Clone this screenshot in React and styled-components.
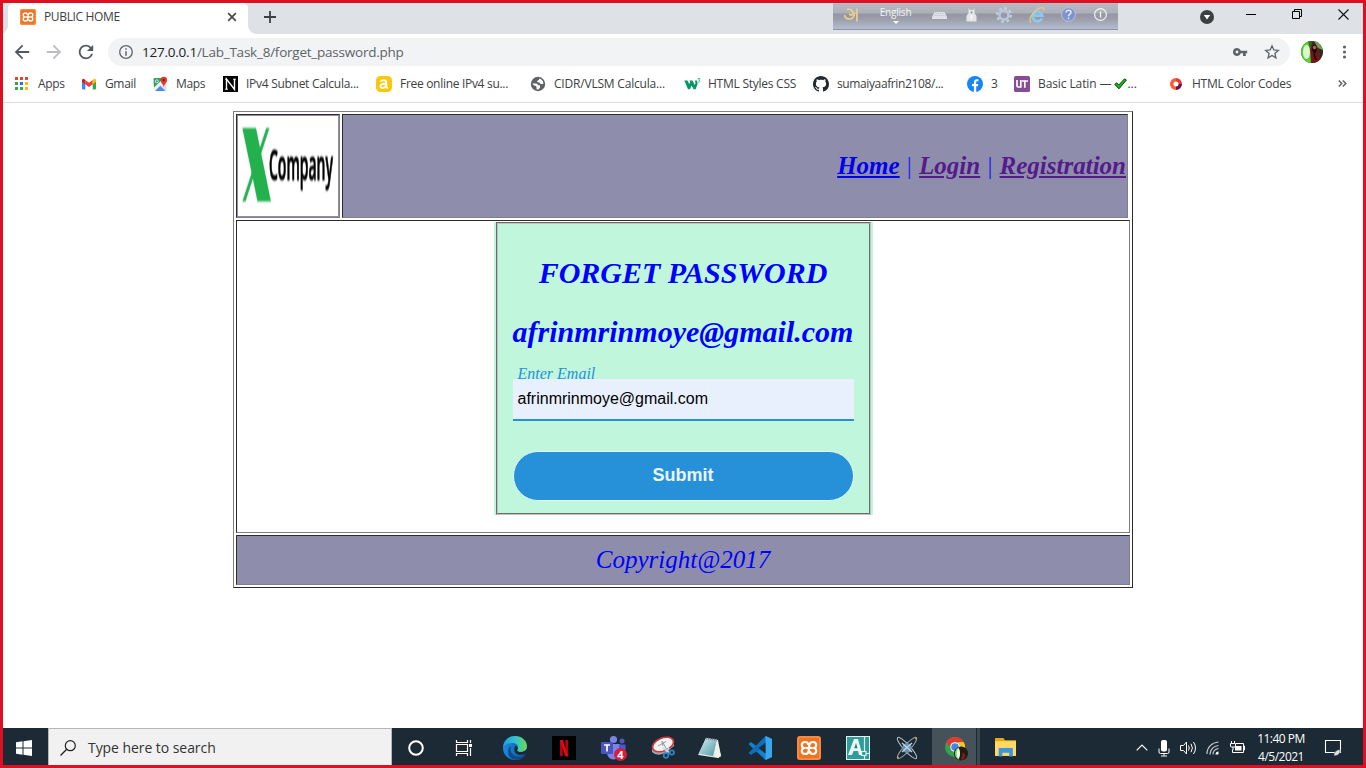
import React from "react";
import styled, { createGlobalStyle } from "styled-components";

const GlobalStyle = createGlobalStyle`
  * { box-sizing: border-box; }
  body { margin: 0; background: #fff; overflow: hidden; }
`;

const ui = `"Open Sans", "Noto Sans", sans-serif`;
const serif = `"Liberation Serif", "Times New Roman", serif`;
const arial = `"Liberation Sans", Arial, sans-serif`;

/* ---------- frame ---------- */
const Screen = styled.div`
  position: relative;
  display: flex;
  flex-direction: column;
  width: 1366px;
  height: 768px;
  border: 3px solid #dc1021;
  background: #fff;
  font-family: ${ui};
  overflow: hidden;
`;

const Icon = styled.svg`
  display: block;
  flex: none;
  width: ${(p) => p.$w || 16}px;
  height: ${(p) => p.$h || p.$w || 16}px;
  overflow: visible;
`;

const Text = styled.span`
  font-size: ${(p) => p.$size || 12}px;
  letter-spacing: ${(p) => p.$ls || 0}px;
  color: ${(p) => p.$color || "#3c4043"};
  white-space: pre;
  line-height: 16px;
`;

/* ---------- tab strip ---------- */
const TabStrip = styled.div`
  display: flex;
  flex: none;
  height: 31px;
  padding-left: 5px;
  background: #dee1e6;
`;

const Tab = styled.div`
  position: relative;
  display: flex;
  align-items: center;
  width: 240px;
  height: 31px;
  padding: 0 11px 3px 12px;
  background: #fff;
  border-radius: 5px 5px 0 0;
  &::before,
  &::after {
    content: "";
    position: absolute;
    bottom: 0;
    width: 8px;
    height: 8px;
  }
  &::before {
    left: -8px;
    background: radial-gradient(circle at 0 0, #dee1e6 7.5px, #fff 8px);
  }
  &::after {
    right: -8px;
    background: radial-gradient(circle at 100% 0, #dee1e6 7.5px, #fff 8px);
  }
`;

const TabTitle = styled(Text)`
  flex: 1;
  margin-left: 8px;
`;

const NewTab = styled.div`
  padding: 8px 0 0 16px;
  flex: 1;
`;

const WindowButtons = styled.div`
  display: flex;
  align-items: flex-start;
  padding: 5px 14px 0 0;
`;

const WinButton = styled.div`
  display: flex;
  width: ${(p) => p.$w}px;
  justify-content: flex-end;
  padding-top: ${(p) => p.$top || 0}px;
`;

/* ---------- address bar ---------- */
const Toolbar = styled.div`
  display: flex;
  flex: none;
  align-items: center;
  height: 36px;
  padding: 0 0 0 10px;
  gap: 14px;
`;

const Omnibox = styled.div`
  display: flex;
  align-items: center;
  width: 1182px;
  height: 28px;
  margin-left: -1px;
  padding: 0 10px;
  border-radius: 14px;
  background: #f1f3f4;
`;

const Url = styled.div`
  flex: 1;
  margin-left: 8px;
  font-size: 13.5px;
  letter-spacing: ${(p) => p.$ls}px;
  line-height: 20px;
  color: #5f6368;
  white-space: nowrap;
  b { font-weight: 400; color: #202124; }
`;

const OmniActions = styled.div`
  display: flex;
  align-items: center;
  gap: 16px;
`;

const Profile = styled.div`
  display: flex;
  align-items: center;
  gap: 19px;
  margin-left: -3px;
`;

/* ---------- bookmarks ---------- */
const Bookmarks = styled.div`
  display: flex;
  flex: none;
  align-items: center;
  height: 33px;
  padding: 0 0 5px 11px;
  border-bottom: 1px solid #dadce0;
`;

const BookmarkItem = styled.div`
  display: flex;
  align-items: center;
  gap: 8px;
  flex: none;
  width: ${(p) => p.$w}px;
`;

const LabelRow = styled.div`
  display: flex;
  align-items: center;
`;

/* ---------- page ---------- */
const Page = styled.main`
  flex: 1;
  padding-top: 8px;
  font-family: ${serif};
`;

const Layout = styled.div`
  display: flex;
  flex-direction: column;
  gap: 2px;
  width: 900px;
  height: 477px;
  margin: 0 auto;
  padding: 2px;
  border: 1px solid;
  border-color: #808080 #2c2c2c #2c2c2c #808080;
`;

const Cell = styled.div`
  border: 1px solid;
  border-color: #2c2c2c #808080 #808080 #2c2c2c;
  background: ${(p) => (p.$tint ? "#8e8eac" : "#fff")};
`;

const HeaderRow = styled.div`
  display: flex;
  flex: none;
  gap: 2px;
  height: 104px;
  padding-right: 2px;
`;

const LogoCell = styled(Cell)`
  width: 104px;
  padding: 1px;
`;

const NavCell = styled(Cell)`
  display: flex;
  flex: 1;
  align-items: center;
  justify-content: flex-end;
  gap: 6.25px;
  padding-right: 1px;
  color: #0000ff;
  font-size: 25px;
  font-style: italic;
`;

const NavLink = styled.span`
  font-weight: bold;
  text-decoration: underline;
  color: ${(p) => (p.$visited ? "#551a8b" : "#0000ee")};
`;

const Bar = styled.span`
  width: 6.9px;
  font-style: normal;
  text-align: center;
  color: #1c1cf8;
`;

const BodyCell = styled(Cell)`
  display: flex;
  flex: none;
  justify-content: center;
  align-items: flex-start;
  height: 313px;
  padding-top: 1px;
`;

const FormBack = styled.div`
  width: 379px;
  height: 293px;
  padding: 0 2px;
  background: #c0f7dc;
`;

const FormBox = styled.form`
  display: flex;
  flex-direction: column;
  height: 293px;
  padding: 32px 15px 0;
  border: 2px groove #c0c0c0;
`;

const Heading = styled.h3`
  margin: 0 0 25px;
  font-size: 30px;
  line-height: 34px;
  font-style: italic;
  text-align: center;
  color: #0000ff;
  white-space: nowrap;
`;

const Label = styled.label`
  margin-top: -9px;
  padding-left: 5px;
  font-size: 16px;
  line-height: 18px;
  font-style: italic;
  color: #2691d9;
`;

/* The field covers the lower edge of its label. */
const Field = styled.div`
  position: relative;
  height: 42px;
  margin: -4px 0 30px;
  padding: 0 5px;
  border-bottom: 2px solid #2691d9;
  background: #e8f0fe;
  font: 16px/39px ${arial};
  color: #000;
`;

const Submit = styled.button`
  height: 50px;
  padding: 0 0 2px;
  border: 1px solid #e2f6f2;
  border-radius: 25px;
  background: #2691d9;
  color: #e9f4fb;
  font: bold 18px ${arial};
`;

const Footer = styled(Cell)`
  flex: none;
  height: 50px;
  font-size: 25px;
  line-height: 48px;
  font-style: italic;
  text-align: center;
  color: #0000ff;
`;

/* ---------- input method bar ---------- */
const ImeBar = styled.div`
  position: absolute;
  top: -3px;
  left: 830px;
  display: flex;
  width: 285px;
  height: 30px;
  align-items: center;
  border-bottom: 1px solid #8d95ac;
  background: linear-gradient(#c65a6a 0, #c65a6a 3px, #b7bac4 3px, #adb0b9 13px, #9496a0 14px, #9b9eaa 19px, #b2bacd 28px);
`;

const ImeSlot = styled.div`
  display: flex;
  flex-direction: column;
  align-items: center;
  gap: 3px;
  width: ${(p) => p.$w}px;
`;

const ImeText = styled.span`
  font: 10px/12px ${ui};
  letter-spacing: -0.2px;
  color: #f4f5f7;
`;

/* ---------- taskbar ---------- */
const Taskbar = styled.footer`
  display: flex;
  flex: none;
  height: 37px;
  background: #1c2a35;
`;

const Start = styled.div`
  display: flex;
  align-items: center;
  width: 45px;
  padding: 2px 0 0 13px;
`;

const Search = styled.div`
  display: flex;
  align-items: center;
  gap: 12px;
  width: 344px;
  padding: 1px 0 0 11px;
  border: 1px solid #b4b6b8;
  border-bottom: 0;
  background: #f1f1f1;
`;

const TaskCell = styled.div`
  display: flex;
  align-items: center;
  justify-content: center;
  width: ${(p) => p.$w || 49}px;
  padding-top: 2px;
`;

const ActiveCell = styled(TaskCell)`
  width: 48px;
  padding-left: 2px;
  background: linear-gradient(90deg, #45525a 44px, #1c2a35 44px, #1c2a35 45px, #3c4951 45px);
`;

const Tray = styled.div`
  display: flex;
  flex: 1;
  align-items: center;
  justify-content: flex-end;
  padding: 2px 22px 0 0;
`;

const TrayIcons = styled.div`
  display: flex;
  align-items: center;
  gap: 8px;
`;

const Clock = styled.div`
  display: flex;
  flex-direction: column;
  align-items: center;
  width: 72px;
`;

const ClockText = styled(Text)`
  line-height: 18px;
`;

/* ---------- drawings ---------- */
const Xampp = ({ size }) => (
  <Icon $w={size} viewBox="0 0 24 24">
    <rect width="24" height="24" rx="2.5" fill="#ef7321" />
    <rect x="1" y="1" width="22" height="22" rx="2" fill="none" stroke="#f6a468" strokeWidth="1" />
    <path d="M11 9V8.500Q11 6 8.200 6 4.800 6 4.800 9 4.800 11.300 6.800 12 4.800 12.700 4.800 15 4.800 18 8.200 18 11 18 11.600 15.500L12.400 8.500Q13 6 15.800 6 19.200 6 19.200 9 19.200 11.300 17.200 12 19.200 12.700 19.200 15 19.200 18 15.800 18 13 18 13 15.500V15" fill="none" stroke="#fff" strokeWidth="2.200" />
    <path d="M8.500 12h7" stroke="#fff" strokeWidth="2.200" />
  </Icon>
);

const AppsIcon = () => {
  const colors = ["#ea4335", "#ea4335", "#ea4335", "#34a853", "#1a73e8", "#fbbc04", "#34a853", "#34a853", "#fbbc04"];
  return (
    <Icon viewBox="0 0 16 16">
      {colors.map((c, i) => (
        <rect key={i} x={1 + (i % 3) * 5} y={1 + Math.floor(i / 3) * 5} width="3" height="3" fill={c} />
      ))}
    </Icon>
  );
};

const GmailIcon = () => (
  <Icon viewBox="0 0 16 16">
    <path d="M1 4.500V12.500Q1 13.500 2 13.500H4.300V7Z" fill="#4285f4" />
    <path d="M11.700 7V13.500H14Q15 13.500 15 12.500V4.500Z" fill="#34a853" />
    <path d="M1 4.500Q1 2.500 2.700 2.800L4.300 4V8.200L1 5.800Z" fill="#c5221f" />
    <path d="M4.300 4 8 6.800 11.700 4V8.200L8 11 4.300 8.200Z" fill="#ea4335" />
    <path d="M11.700 4 13.300 2.800Q15 2.500 15 4.500V5.800L11.700 8.200Z" fill="#fbbc04" />
  </Icon>
);

const MapsIcon = () => (
  <Icon viewBox="0 0 16 16">
    <path d="M1.500 3Q1.500 2 2.500 2H12L2 13Z" fill="#34a06a" />
    <path d="M1.500 12 11.500 2.500 14 5 4 15H2.500Q1.500 15 1.500 14Z" fill="#f1f1ee" />
    <path d="M8.500 9.500 14.500 5.500V14.500L13.500 15Z" fill="#dde1e5" />
    <path d="M3 15l5.300-5.300L13.500 15Z" fill="#4a8af4" />
    <circle cx="4.800" cy="5.300" r="1.500" fill="none" stroke="#e5f4ea" strokeWidth=".9" />
    <path d="M11.800.7a3.300 3.300 0 0 1 3.300 3.300c0 2.500-2.500 3.500-3.300 7-.8-3.500-3.300-4.500-3.300-7A3.300 3.300 0 0 1 11.800.7Z" fill="#e13b30" />
    <circle cx="11.800" cy="4" r="1.200" fill="#7b1e18" />
  </Icon>
);

const SubnetIcon = () => (
  <Icon viewBox="0 0 16 16">
    <rect x="1" y="0" width="15" height="16" fill="#000" />
    <path d="M4.500 13.500V3l8 10.500V3" fill="none" stroke="#fff" strokeWidth="1.400" />
    <path d="M3 13.200h3M11 3.200h3M3 3.200h2" stroke="#fff" strokeWidth=".9" />
  </Icon>
);

const LetterA = () => (
  <Icon viewBox="0 0 16 16">
    <rect width="16" height="16" rx="4.500" fill="#fcc60b" />
    <path d="M4.800 5.800C5.500 3.700 10.200 3.700 10.200 6.300v4.500q0 1.200 1.800.8M10.200 7.600C7 7.600 4.500 8.300 4.500 10.200c0 2.500 4.700 2.200 5.700-.6" fill="none" stroke="#fff" strokeWidth="2" />
  </Icon>
);

const GlobeIcon = () => (
  <Icon viewBox="0 0 16 16">
    <circle cx="8" cy="8" r="7.200" fill="#5f6368" />
    <path d="M2.500 7.500H6Q8 7.500 8 9.200H10V11.500L8.500 13.400 6.500 13.200V11.200Q6.500 9.800 5 9.800 3 9.500 2.500 7.500ZM9.200 2.600 9 4Q7.500 4.200 7 5.600 7.500 6.700 9.500 6.600L10.500 8H13.300C13.600 5.200 11.800 3.200 9.200 2.600Z" fill="#fff" />
  </Icon>
);

const W3Icon = () => (
  <Icon viewBox="0 0 16 16">
    <path d="M.3 4.500H3.500L5.200 8l1-1.700-.7-1.800H8.500L10.700 9l.8-2-.6-2.500h2.200L13.600 8 11.600 13.300H9.700L7.500 9.500 6 13.300H4Z" fill="#059862" />
    <path d="M13.800 2.500h2.100l-1.200 1.700c2 .2 1.500 2.500-.8 1.900" fill="none" stroke="#4db993" strokeWidth="1" />
  </Icon>
);

const GithubIcon = () => (
  <Icon viewBox="0 0 16 16">
    <path fill="#24292e" d="M8 0C3.580 0 0 3.580 0 8c0 3.540 2.290 6.530 5.470 7.590.4.070.55-.17.55-.38 0-.19-.01-.82-.01-1.490-2.010.37-2.530-.49-2.690-.94-.09-.23-.48-.94-.82-1.130-.28-.15-.68-.52-.01-.53.63-.01 1.080.58 1.230.82.72 1.210 1.870.87 2.330.66.07-.52.28-.87.51-1.070-1.780-.2-3.640-.89-3.640-3.950 0-.87.31-1.590.82-2.150-.08-.2-.36-1.020.08-2.120 0 0 .67-.21 2.200.82.64-.18 1.320-.27 2-.27s1.360.09 2 .27c1.530-1.040 2.200-.82 2.200-.82.44 1.100.16 1.920.08 2.120.51.56.82 1.270.82 2.150 0 3.070-1.870 3.750-3.650 3.950.29.25.54.73.54 1.480 0 1.070-.01 1.930-.01 2.200 0 .21.15.46.55.38A8.010 8.010 0 0 0 16 8c0-4.420-3.580-8-8-8Z" />
  </Icon>
);

const FacebookIcon = () => (
  <Icon viewBox="0 0 16 16">
    <circle cx="8" cy="8" r="8" fill="#1785f3" />
    <path d="M6.900 16V10.300H5V8h1.900V6.300c0-2.100 1.100-3.100 3-3.100l1.500.1v2h-1c-.9 0-1.200.5-1.200 1.200V8h2.100l-.4 2.300H9.200V16Z" fill="#fff" />
  </Icon>
);

const UnicodeIcon = () => (
  <Icon viewBox="0 0 16 16">
    <rect width="16" height="16" rx="1.500" fill="#874c97" />
    <path d="M3 4v5.800q0 1.200 1.200 1.200H6.800V4M8 5h6M10.800 5v6.800" fill="none" stroke="#fff" strokeWidth="1.700" />
  </Icon>
);

const ColorRing = () => (
  <Icon viewBox="0 0 16 16">
    <path d="M8 2a6 6 0 1 0 0 12V10.500a2.500 2.500 0 1 1 0-5Z" fill="#fc5b35" />
    <path d="M8 2a6 6 0 0 1 6 6H10.500A2.500 2.500 0 0 0 8 5.500Z" fill="#e23c35" />
    <path d="M14 8a6 6 0 0 1-6 6V10.500A2.500 2.500 0 0 0 10.500 8Z" fill="#6a1544" />
  </Icon>
);

const CheckMark = () => (
  <Icon $w={13} $h={12} viewBox="0 0 13 12">
    <path d="M.7 6.500 2.700 4.800 4.800 7 10.500.9 12.400 2 5 10.800Z" fill="#19b81d" stroke="#0a3d0b" strokeWidth="1" />
  </Icon>
);

const Avatar = ({ size }) => (
  <Icon $w={size} viewBox="0 0 22 22">
    <defs>
      <clipPath id={"round" + size}><circle cx="11" cy="11" r="11" /></clipPath>
    </defs>
    <g clipPath={`url(#round${size})`}>
      <rect width="22" height="22" fill="#27301b" />
      <path d="M13 0H22V9L17 7Z" fill="#7d9c5c" />
      <rect width="10" height="22" fill="#5ccf34" />
      <path d="M7 0H12L9 8Z" fill="#39601f" />
      <ellipse cx="5.500" cy="11" rx="3.500" ry="7" fill="#dcf7d0" />
      <path d="M10 22 9 8Q12 0 15 5L19 11 20 22Z" fill="#6b1a1c" />
      <path d="M11 9Q11 3 14 4 16.500 6 15.500 11L13 13Z" fill="#1d0d0e" />
      <circle cx="13.500" cy="6.500" r="1.700" fill="#a56b55" />
      <path d="M13 13 15 19" stroke="#2c0a0d" strokeWidth="2" />
    </g>
  </Icon>
);

const bookmarks = [
  { w: 67, icon: <AppsIcon />, label: "Apps", ls: -0.3 },
  { w: 71, icon: <GmailIcon />, label: "Gmail", ls: -0.35 },
  { w: 70, icon: <MapsIcon />, label: "Maps", ls: -0.35 },
  { w: 154, icon: <SubnetIcon />, label: "IPv4 Subnet Calcula...", ls: -0.28 },
  { w: 154, icon: <LetterA />, label: "Free online IPv4 su...", ls: -0.3 },
  { w: 154, icon: <GlobeIcon />, label: "CIDR/VLSM Calcula...", ls: -0.2 },
  { w: 129, icon: <W3Icon />, label: "HTML Styles CSS", ls: -0.25 },
  { w: 154, icon: <GithubIcon />, label: "sumaiyaafrin2108/...", ls: -0.38 },
  { w: 47, icon: <FacebookIcon />, label: "3", ls: 0 },
  { w: 154, icon: <UnicodeIcon />, label: "Basic Latin — ", ls: -0.1, check: true },
  { w: 170, icon: <ColorRing />, label: "HTML Color Codes", ls: -0.25 },
];

const BookmarkBar = () => (
  <Bookmarks>
    {bookmarks.map((b) => (
      <BookmarkItem key={b.label} $w={b.w}>
        {b.icon}
        <LabelRow>
          <Text $ls={b.ls}>{b.label}</Text>
          {b.check && <CheckMark />}
          {b.check && <Text>...</Text>}
        </LabelRow>
      </BookmarkItem>
    ))}
    <Icon $w={9} $h={7} viewBox="0 0 9 7">
      <path d="M.8.5 3.800 3.500.8 6.500M4.800.5 7.800 3.500 4.800 6.500" fill="none" stroke="#5f6368" strokeWidth="1.500" />
    </Icon>
  </Bookmarks>
);

const CompanyLogo = () => (
  <Icon $w={100} viewBox="0 0 100 100">
    <defs>
      <filter id="soften"><feGaussianBlur stdDeviation=".5 .8" /></filter>
    </defs>
    <rect width="100" height="100" fill="#fff" />
    <g filter="url(#soften)">
      <path d="M28.300 12H31.500L7.500 85.500H4.300Z" fill="#23b14d" />
      <path d="M4.300 12H18L33 85.500H19.500Z" fill="#23b14d" />
      <text x="31" y="63.500" fontFamily="'Open Sans', sans-serif" fontWeight="600" fontSize="41" textLength="64" lengthAdjust="spacingAndGlyphs" fill="#000" stroke="#000" strokeWidth="1.100">Company</text>
    </g>
  </Icon>
);

const Ime = () => (
  <ImeBar>
    <ImeSlot $w={35}>
      <Icon $w={14} viewBox="0 0 14 14">
        <path d="M3 1.500C6 .5 9.500 2.500 8.800 5.500 8 8 5.500 7.500 5.800 5.500M.5 7C1.500 12 8.500 12.500 10 7.500L11 4.500M12.900.5V13.500" fill="none" stroke="#ecd08c" strokeWidth="1.700" />
      </Icon>
    </ImeSlot>
    <ImeSlot $w={55}>
      <ImeText>English</ImeText>
      <Icon $w={6} $h={3} viewBox="0 0 6 3"><path d="M0 0h6L3 3Z" fill="#fff" /></Icon>
    </ImeSlot>
    <ImeSlot $w={33}>
      <Icon $w={15} $h={8} viewBox="0 0 15 8">
        <path d="M2.500 1h10L15 6v2H0V6Z" fill="#dfe1e6" />
        <path d="M3 2.500h9M2.300 4.500h10.500" stroke="#b9bcc6" strokeWidth=".7" strokeDasharray="1.500 .7" />
      </Icon>
    </ImeSlot>
    <ImeSlot $w={31}>
      <Icon $w={11} $h={14} viewBox="0 0 11 14">
        <path d="M2.500 0 4 2H7L8.500 0V5L10.500 8V13.500H.5V8L2.500 5Z" fill="#e3e5e9" />
        <circle cx="5.500" cy="4.500" r="1" fill="#8f929b" />
        <path d="M5.500 7v4" stroke="#fff" strokeWidth="1.500" />
      </Icon>
    </ImeSlot>
    <ImeSlot $w={34}>
      <Icon $w={16} viewBox="0 0 16 16">
        <circle cx="8" cy="8" r="6.800" fill="none" stroke="#c3cfdf" strokeWidth="2.400" strokeDasharray="2.700 2.640" />
        <circle cx="8" cy="8" r="4.500" fill="none" stroke="#b7c7dd" strokeWidth="2.600" />
      </Icon>
    </ImeSlot>
    <ImeSlot $w={31}>
      <Icon $w={16} viewBox="0 0 16 16">
        <path d="M13 11.500A4.800 4.800 0 1 1 13.300 8.700H5" fill="none" stroke="#8cc8f0" strokeWidth="2.800" />
        <path d="M2 15.500C-1 13 3 6 8 2.500 12-.3 16 0 14.500 3.500" fill="none" stroke="#e6cd80" strokeWidth="1.300" />
      </Icon>
    </ImeSlot>
    <ImeSlot $w={32}>
      <Icon $w={15} viewBox="0 0 15 15">
        <circle cx="7.500" cy="7.500" r="6.900" fill="#7f94cd" stroke="#b9c5e2" />
        <path d="M5 5.500C5 2.500 10 2.800 10 5.500 10 7.500 7.500 7 7.500 9.300M7.500 10.500v1.800" fill="none" stroke="#e4e9f5" strokeWidth="1.500" />
      </Icon>
    </ImeSlot>
    <ImeSlot $w={33}>
      <Icon $w={13} viewBox="0 0 13 13">
        <circle cx="6.500" cy="6.500" r="5.900" fill="none" stroke="#f3f4f6" strokeWidth="1.200" />
        <path d="M6.500 3.500v6" stroke="#f3f4f6" strokeWidth="1.300" />
      </Icon>
    </ImeSlot>
  </ImeBar>
);

const TaskIcons = () => (
  <>
    <TaskCell $w={48}>
      <Icon $w={16} viewBox="0 0 16 16"><circle cx="8" cy="8" r="6.800" fill="none" stroke="#fff" strokeWidth="2" /></Icon>
    </TaskCell>
    <TaskCell $w={48}>
      <Icon $w={17} $h={16} viewBox="0 0 17 16">
        <path d="M.5 0v2.500h11V0M.5 16v-2.500h11V16M.5 4.500h11v7H.5ZM14.500 0v3M14.500 8v8" fill="none" stroke="#fff" strokeWidth="1.200" />
        <rect x="13" y="4" width="3" height="3" fill="#fff" />
      </Icon>
    </TaskCell>
    <TaskCell $w={54}>
      <Icon $w={24} viewBox="0 0 24 24">
        <defs>
          <linearGradient id="edgeTop" x1="0" x2="1"><stop offset="0" stopColor="#1f9de0" /><stop offset=".5" stopColor="#2fc3d4" /><stop offset="1" stopColor="#6ed84e" /></linearGradient>
          <linearGradient id="edgeLow" x1="0" x2="1"><stop offset="0" stopColor="#1a8be0" /><stop offset="1" stopColor="#12519f" /></linearGradient>
        </defs>
        <circle cx="12" cy="12" r="12" fill="url(#edgeLow)" />
        <path d="M0 11C1 4 6 0 12 0c7 0 12 5 12 10 0 4-3 6-6.500 6-3 0-4-1.500-3-2.800 2-3-1-6.200-5-6.200C5 7 1 9 0 11Z" fill="url(#edgeTop)" />
        <path d="M8 10c-2 7 3 11 9 10.500 2.500 0 4.500-1.500 5-2-3 6-9 6-12.500 4.500C4 21 4 12 8 10Z" fill="#114a8b" />
        <path d="M12 10C14.500 10 15 12.200 14.500 13.200c-1 1.300 0 2.800 3 2.800 3 0 5-1 6.300-3 0 2-.6 3.800-1.600 5-6 2.500-13 .5-10.200-8Z" fill="#1c2a35" />
      </Icon>
    </TaskCell>
    <TaskCell $w={44}>
      <Icon $w={24} viewBox="0 0 24 24">
        <rect width="24" height="24" fill="#000" />
        <path d="M8 4h2.800v16L8 20.500ZM13.300 4H16v16.500l-2.700-.5Z" fill="#b1060f" />
        <path d="M8 4h2.800L16 20.500l-2.800-.5Z" fill="#e50914" />
      </Icon>
    </TaskCell>
    <TaskCell $w={56}>
      <Icon $w={26} viewBox="0 0 26 26">
        <circle cx="12.500" cy="4.500" r="3.600" fill="#7b83eb" />
        <circle cx="21" cy="6" r="2.500" fill="#5059c9" />
        <path d="M6 9h13v9a6.500 6.500 0 0 1-13 0Z" fill="#7b83eb" />
        <path d="M18 9.500h6.500V15a4 4 0 0 1-6.500 3Z" fill="#5059c9" />
        <rect x="0" y="7" width="12" height="12" rx="1" fill="#4b53bc" />
        <path d="M3 10h6M6 10v6.500" stroke="#fff" strokeWidth="1.700" />
        <circle cx="19.500" cy="19.500" r="6.500" fill="#d91d3c" />
        <text x="19.500" y="23.500" textAnchor="middle" fontFamily="'Open Sans', sans-serif" fontWeight="700" fontSize="11" fill="#fff">4</text>
      </Icon>
    </TaskCell>
    <TaskCell $w={42}>
      <Icon $w={24} viewBox="0 0 24 24">
        <path d="M1 11V16Q6 21 14 17L23 10V6Z" fill="#9fa6ab" />
        <ellipse cx="12" cy="8.500" rx="11" ry="6.500" fill="#f1f4f5" stroke="#cc3c3c" strokeWidth="1.600" transform="rotate(-22 12 8.500)" />
        <path d="M7 10 15 5.500M12 10l-1-5 5 9" fill="none" stroke="#8e989f" strokeWidth="1" />
        <path d="M12 12l7 5M18 12l-3 5" stroke="#c9d6df" strokeWidth="1.600" />
        <circle cx="15" cy="19.500" r="2.300" fill="none" stroke="#2d85c9" strokeWidth="1.700" />
        <circle cx="20.800" cy="16.500" r="2.200" fill="none" stroke="#2d85c9" strokeWidth="1.700" />
      </Icon>
    </TaskCell>
    <TaskCell $w={52}>
      <Icon $w={24} viewBox="0 0 24 24">
        <defs><linearGradient id="note" x1="0" x2="1" y2="1"><stop offset="0" stopColor="#d9eef1" /><stop offset="1" stopColor="#4a97a4" /></linearGradient></defs>
        <path d="M8 2 20 4 23 20 20 22 0 19Z" fill="#d9dfdf" />
        <path d="M8 2 19 4 15 20 1 17.500Z" fill="url(#note)" />
        <path d="M19 4 23 20 20 22 16 20Z" fill="#f1f1e6" />
        <path d="M8 2.500 20 4" stroke="#79868c" strokeWidth="1.800" strokeDasharray="1 1" />
      </Icon>
    </TaskCell>
    <TaskCell $w={48}>
      <Icon $w={24} viewBox="0 0 24 24">
        <path d="M17.500 0 24 3V21L17.500 24 2 9.500.5 8 3 6 5 7.500 17.500 17.500Z" fill="#1480cf" />
        <path d="M17.500 0 24 3V8L5 17.500 3 19 .5 17 2 15.500Z" fill="#0d6fbc" />
        <path d="M17.500 0 24 3V21L17.500 24Z" fill="#39a6ee" />
        <path d="M17.500 6.800V17.200L10.500 12Z" fill="#1c2a35" />
      </Icon>
    </TaskCell>
    <TaskCell $w={50}><Xampp size={24} /></TaskCell>
    <TaskCell $w={48}>
      <Icon $w={24} viewBox="0 0 24 24">
        <rect width="24" height="24" fill="#e5efee" />
        <rect x="1" y="1" width="22" height="22" fill="#2b9d9a" />
        <path d="M2 19 8 3h4l4.500 16H13l-1-4H7.500L6 19Z" fill="#eaf5f4" />
        <path d="M8.300 12.300l1.700-5.300 1.500 5.300Z" fill="#18807f" />
        <path d="M15.500 15.500h4.500v4h-4.500ZM18.500 1v14.500M18.500 19.500V23M20 17.500h4" fill="none" stroke="#e5efee" strokeWidth="1.200" />
      </Icon>
    </TaskCell>
    <TaskCell $w={50}>
      <Icon $w={22} $h={24} viewBox="0 0 22 24">
        <ellipse cx="11" cy="12" rx="14" ry="3.300" fill="none" stroke="#b9c3c9" strokeWidth="1" transform="rotate(48 11 12)" />
        <ellipse cx="11" cy="12" rx="14" ry="3.300" fill="none" stroke="#98a4ab" strokeWidth="1" transform="rotate(-48 11 12)" />
        <circle cx="11" cy="12" r="4.800" fill="#6391b5" />
        <path d="M6 7 16 16M16 7 6 16" stroke="#c6d2d9" strokeWidth="1.300" />
        <circle cx="20" cy="2.500" r="1" fill="#d4a73d" /><circle cx="2" cy="21.500" r="1" fill="#d4a73d" />
      </Icon>
    </TaskCell>
    <ActiveCell>
      <Icon $w={24} viewBox="0 0 24 24">
        <circle cx="10" cy="11" r="10" fill="#33a352" />
        <path d="M1.300 6A10 10 0 0 1 18.700 6H10L6 13Z" fill="#e33b2e" />
        <path d="M18.700 6A10 10 0 0 1 10 21l4.500-8L13 6Z" fill="#fbc116" />
        <circle cx="10" cy="11" r="4.800" fill="#fff" />
        <circle cx="10" cy="11" r="3.800" fill="#4285f4" />
        <svg x="9" y="10" width="14" height="15" viewBox="0 0 22 22">
          <circle cx="11" cy="11" r="11" fill="#241a13" />
          <path d="M8 1A11 11 0 0 0 8 21Z" fill="#8bd866" />
          <ellipse cx="7" cy="11" rx="2.500" ry="7" fill="#ecf8e6" />
          <path d="M14 9 18 13 16 20 11 21Z" fill="#7a1e20" />
        </svg>
      </Icon>
    </ActiveCell>
    <TaskCell $w={50}>
      <Icon $w={21} $h={19} viewBox="0 0 20 18">
        <path d="M0 0h8l1.500 2H20v15H0Z" fill="#e5a913" />
        <rect y="3" width="20" height="14" fill="#ffd866" />
        <path d="M3.500 17.500V9.500H17v8h-3.500V14H7v3.500Z" fill="#3d95dc" />
      </Icon>
    </TaskCell>
  </>
);

export default function App() {
  return (
    <>
      <GlobalStyle />
      <Screen>
        <TabStrip>
          <Tab>
            <Xampp size={16} />
            <TabTitle $ls={-0.35}>PUBLIC HOME</TabTitle>
            <Icon $w={10} viewBox="0 0 10 10"><path d="M1.200 1.200 8.800 8.800M8.800 1.200 1.200 8.800" stroke="#45494d" strokeWidth="1.700" /></Icon>
          </Tab>
          <NewTab>
            <Icon $w={12} viewBox="0 0 12 12"><path d="M6 0V12M0 6H12" stroke="#3c4043" strokeWidth="1.800" /></Icon>
          </NewTab>
          <WindowButtons>
            <WinButton $w={20} $top={2}>
              <Icon $w={14} viewBox="0 0 14 14"><circle cx="7" cy="7" r="7" fill="#3c4043" /><path d="M3.800 5h6.400L7 9.500Z" fill="#fff" /></Icon>
            </WinButton>
            <WinButton $w={42} $top={6}><Icon $w={10} $h={1} viewBox="0 0 10 1"><rect width="10" height="1" fill="#000" /></Icon></WinButton>
            <WinButton $w={46} $top={1}><Icon $w={10} viewBox="0 0 10 10"><path d="M.5 2.500h7v7h-7ZM2.500 2.500V.5h7v7H7.500" fill="none" stroke="#000" /></Icon></WinButton>
            <WinButton $w={47} $top={1}><Icon $w={11} viewBox="0 0 11 11"><path d="M.5.5l10 10M10.500.5l-10 10" stroke="#111" strokeWidth="1.100" /></Icon></WinButton>
          </WindowButtons>
        </TabStrip>

        <Toolbar>
          <Icon $w={18} viewBox="2 2 20 20"><path d="M20 11H7.830l5.590-5.590L12 4l-8 8 8 8 1.410-1.410L7.830 13H20v-2z" fill="#54585d" /></Icon>
          <Icon $w={18} viewBox="2 2 20 20"><path d="M12 4l-1.410 1.410L16.170 11H4v2h12.170l-5.580 5.590L12 20l8-8z" fill="#bbbdc0" /></Icon>
          <Icon $w={18} viewBox="2 2 20 20"><path d="M17.650 6.350A7.958 7.958 0 0 0 12 4c-4.420 0-7.990 3.580-7.990 8s3.570 8 7.990 8c3.730 0 6.840-2.550 7.730-6h-2.080A5.990 5.990 0 0 1 12 18c-3.310 0-6-2.690-6-6s2.690-6 6-6c1.660 0 3.140.69 4.220 1.780L13 11h7V4l-2.350 2.350z" fill="#54585d" /></Icon>
          <Omnibox>
            <Icon $w={16} viewBox="0 0 16 16">
              <circle cx="8" cy="8" r="6.300" fill="none" stroke="#5f6368" strokeWidth="1.300" />
              <path d="M8 4.300v1.500M8 7.200v4.500" stroke="#5f6368" strokeWidth="1.500" />
            </Icon>
            <Url $ls={-0.23}><b>127.0.0.1</b>/Lab_Task_8/forget_password.php</Url>
            <OmniActions>
              <Icon $w={16} viewBox="0 0 16 16">
                <path d="M5 4a4 4 0 1 0 3.800 5.200H11V12h2.800V9.200H15.200V6.700H8.800A4 4 0 0 0 5 4Zm0 2.600a1.400 1.400 0 1 1 0 2.800 1.400 1.400 0 0 1 0-2.800Z" fill="#5f6368" fillRule="evenodd" />
              </Icon>
              <Icon $w={16} viewBox="0 0 16 16">
                <path d="M8 1.800 9.800 6l4.500.4-3.400 3 1 4.400L8 11.500l-3.900 2.300 1-4.400-3.400-3L6.200 6Z" fill="none" stroke="#5f6368" strokeWidth="1.300" />
              </Icon>
            </OmniActions>
          </Omnibox>
          <Profile>
            <Avatar size={22} />
            <Icon $w={4} $h={14} viewBox="0 0 4 14">
              <circle cx="2.500" cy="2" r="1.600" fill="#5f6368" /><circle cx="2.500" cy="7" r="1.600" fill="#5f6368" /><circle cx="2.500" cy="12" r="1.600" fill="#5f6368" />
            </Icon>
          </Profile>
        </Toolbar>

        <BookmarkBar />

        <Page>
          <Layout>
            <HeaderRow>
              <LogoCell $tint><CompanyLogo /></LogoCell>
              <NavCell $tint>
                <NavLink>Home</NavLink>
                <Bar>|</Bar>
                <NavLink $visited>Login</NavLink>
                <Bar>|</Bar>
                <NavLink $visited>Registration</NavLink>
              </NavCell>
            </HeaderRow>
            <BodyCell>
              <FormBack>
                <FormBox>
                  <Heading>FORGET PASSWORD</Heading>
                  <Heading>afrinmrinmoye@gmail.com</Heading>
                  <Label>Enter Email</Label>
                  <Field>afrinmrinmoye@gmail.com</Field>
                  <Submit type="button">Submit</Submit>
                </FormBox>
              </FormBack>
            </BodyCell>
            <Footer $tint>Copyright@2017</Footer>
          </Layout>
        </Page>

        <Taskbar>
          <Start>
            <Icon $w={16} viewBox="0 0 16 16">
              <path d="M0 2.200 6.500 1.300V7.500H0ZM7.500 1.200 16 0V7.500H7.500ZM0 8.500H6.500V14.700L0 13.800ZM7.500 8.500H16V16L7.500 14.800Z" fill="#fff" />
            </Icon>
          </Start>
          <Search>
            <Icon $w={16} viewBox="0 0 16 16">
              <circle cx="10.300" cy="5.700" r="5" fill="none" stroke="#222" strokeWidth="1.200" />
              <path d="M6.700 9.300.5 15.500" stroke="#222" strokeWidth="1.300" />
            </Icon>
            <Text $size={14} $ls={-0.06} $color="#333">Type here to search</Text>
          </Search>
          <TaskIcons />
          <Tray>
            <TrayIcons>
              <Icon $w={12} $h={7} viewBox="0 0 12 7"><path d="M.7 6.300 6 1l5.300 5.300" fill="none" stroke="#fff" strokeWidth="1.200" /></Icon>
              <Icon $w={16} viewBox="0 0 16 16">
                <rect x="5" y="0" width="6" height="11.500" rx="2" fill="#fff" />
                <path d="M3 8.500v3.500q0 1.500 1.500 1.500h7q1.500 0 1.500-1.500V8.500M8 13.500v2M5 16h6" fill="none" stroke="#fff" />
              </Icon>
              <Icon $w={17} $h={14} viewBox="0 0 17 14">
                <path d="M.5 4.500h3l3-3.500v12l-3-3.500h-3ZM8.500 4.500q1.500 2.500 0 5M11 2.800q2.800 4.200 0 8.400M13.500 1q4 6 0 12" fill="none" stroke="#fff" />
              </Icon>
              <Icon $w={16} $h={14} viewBox="0 0 16 14">
                <path d="M2 13C2 6 7 1.500 13.500 1M5 13.500c0-5 3.500-8.500 8.500-9M8 13.500c0-3.500 2.500-5.500 5.500-6" fill="none" stroke="#c5cbd0" strokeWidth="1.200" />
                <path d="M10.500 13.500c0-2 1.200-3 3-3v3Z" fill="#fff" />
              </Icon>
              <Icon $w={16} $h={13} viewBox="0 0 16 13">
                <path d="M7 2.500h7.500v9H3.500V8.500M14.500 5h1v4h-1" fill="none" stroke="#fff" />
                <rect x="6" y="5" width="6.500" height="4.500" fill="#fff" />
                <path d="M2.500 0v2M5.500 0v2M1.500 2.500h5V5q0 1-1 1h-3q-1 0-1-1ZM4 6v3" fill="none" stroke="#fff" />
              </Icon>
            </TrayIcons>
            <Clock>
              <ClockText $ls={-0.5} $color="#fff">11:40 PM</ClockText>
              <ClockText $ls={-0.5} $color="#fff">4/5/2021</ClockText>
            </Clock>
            <Icon $w={24} $h={16} viewBox="-8 0 24 16">
              <path d="M.5.500H15.500V12.500H12L9.500 15V12.500H.5Z" fill="none" stroke="#fff" strokeWidth="1.100" />
              <path d="M9 15.500a6 6 0 0 1 6-6 5 5 0 0 1-6 6Z" fill="#dfe3e6" stroke="#1c2a35" strokeWidth=".5" />
            </Icon>
          </Tray>
        </Taskbar>

        <Ime />
      </Screen>
    </>
  );
}
